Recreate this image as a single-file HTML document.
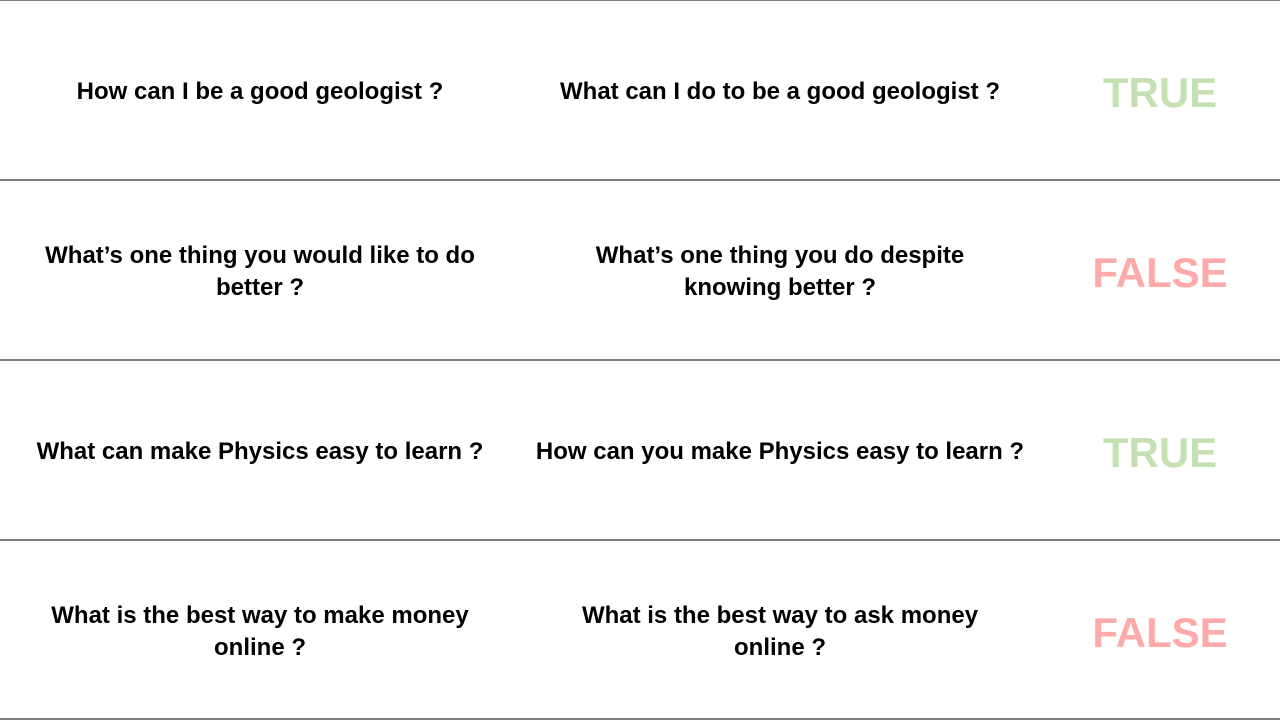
<!DOCTYPE html>
<html><head><style>
body{margin:0;width:1280px;height:720px;background:#fff;position:relative;overflow:hidden;font-family:"Liberation Sans",sans-serif;}
.l{position:absolute;left:0;width:1280px;height:2px;background:#7f7f7f;}
.t{position:absolute;text-align:center;font-size:24px;font-weight:bold;line-height:32px;color:#000;transform:translate(-50%,-50%);}
.b{position:absolute;font-size:42px;font-weight:bold;transform:translate(-50%,-50%);}
.T{color:#c5e0b3}.F{color:#ffaaaa}
</style></head><body>
<div class="l" style="top:0;height:1px"></div>
<div class="l" style="top:179px"></div>
<div class="l" style="top:359px"></div>
<div class="l" style="top:539px"></div>
<div class="l" style="top:718px"></div>

<div class="t" style="left:260px;top:92px;width:500px">How can I be a good geologist ?</div>
<div class="t" style="left:780px;top:92px;width:520px">What can I do to be a good geologist ?</div>
<div class="b T" style="left:1160px;top:93px">TRUE</div>

<div class="t" style="left:260px;top:272px;width:500px">What’s one thing you would like to do better ?</div>
<div class="t" style="left:780px;top:272px;width:420px">What’s one thing you do despite knowing better ?</div>
<div class="b F" style="left:1160px;top:273px">FALSE</div>

<div class="t" style="left:260px;top:452px;width:540px">What can make Physics easy to learn ?</div>
<div class="t" style="left:780px;top:452px;width:540px">How can you make Physics easy to learn ?</div>
<div class="b T" style="left:1160px;top:453px">TRUE</div>

<div class="t" style="left:260px;top:632px;width:480px">What is the best way to make money online ?</div>
<div class="t" style="left:780px;top:632px;width:440px">What is the best way to ask money online ?</div>
<div class="b F" style="left:1160px;top:633px">FALSE</div>
</body></html>
